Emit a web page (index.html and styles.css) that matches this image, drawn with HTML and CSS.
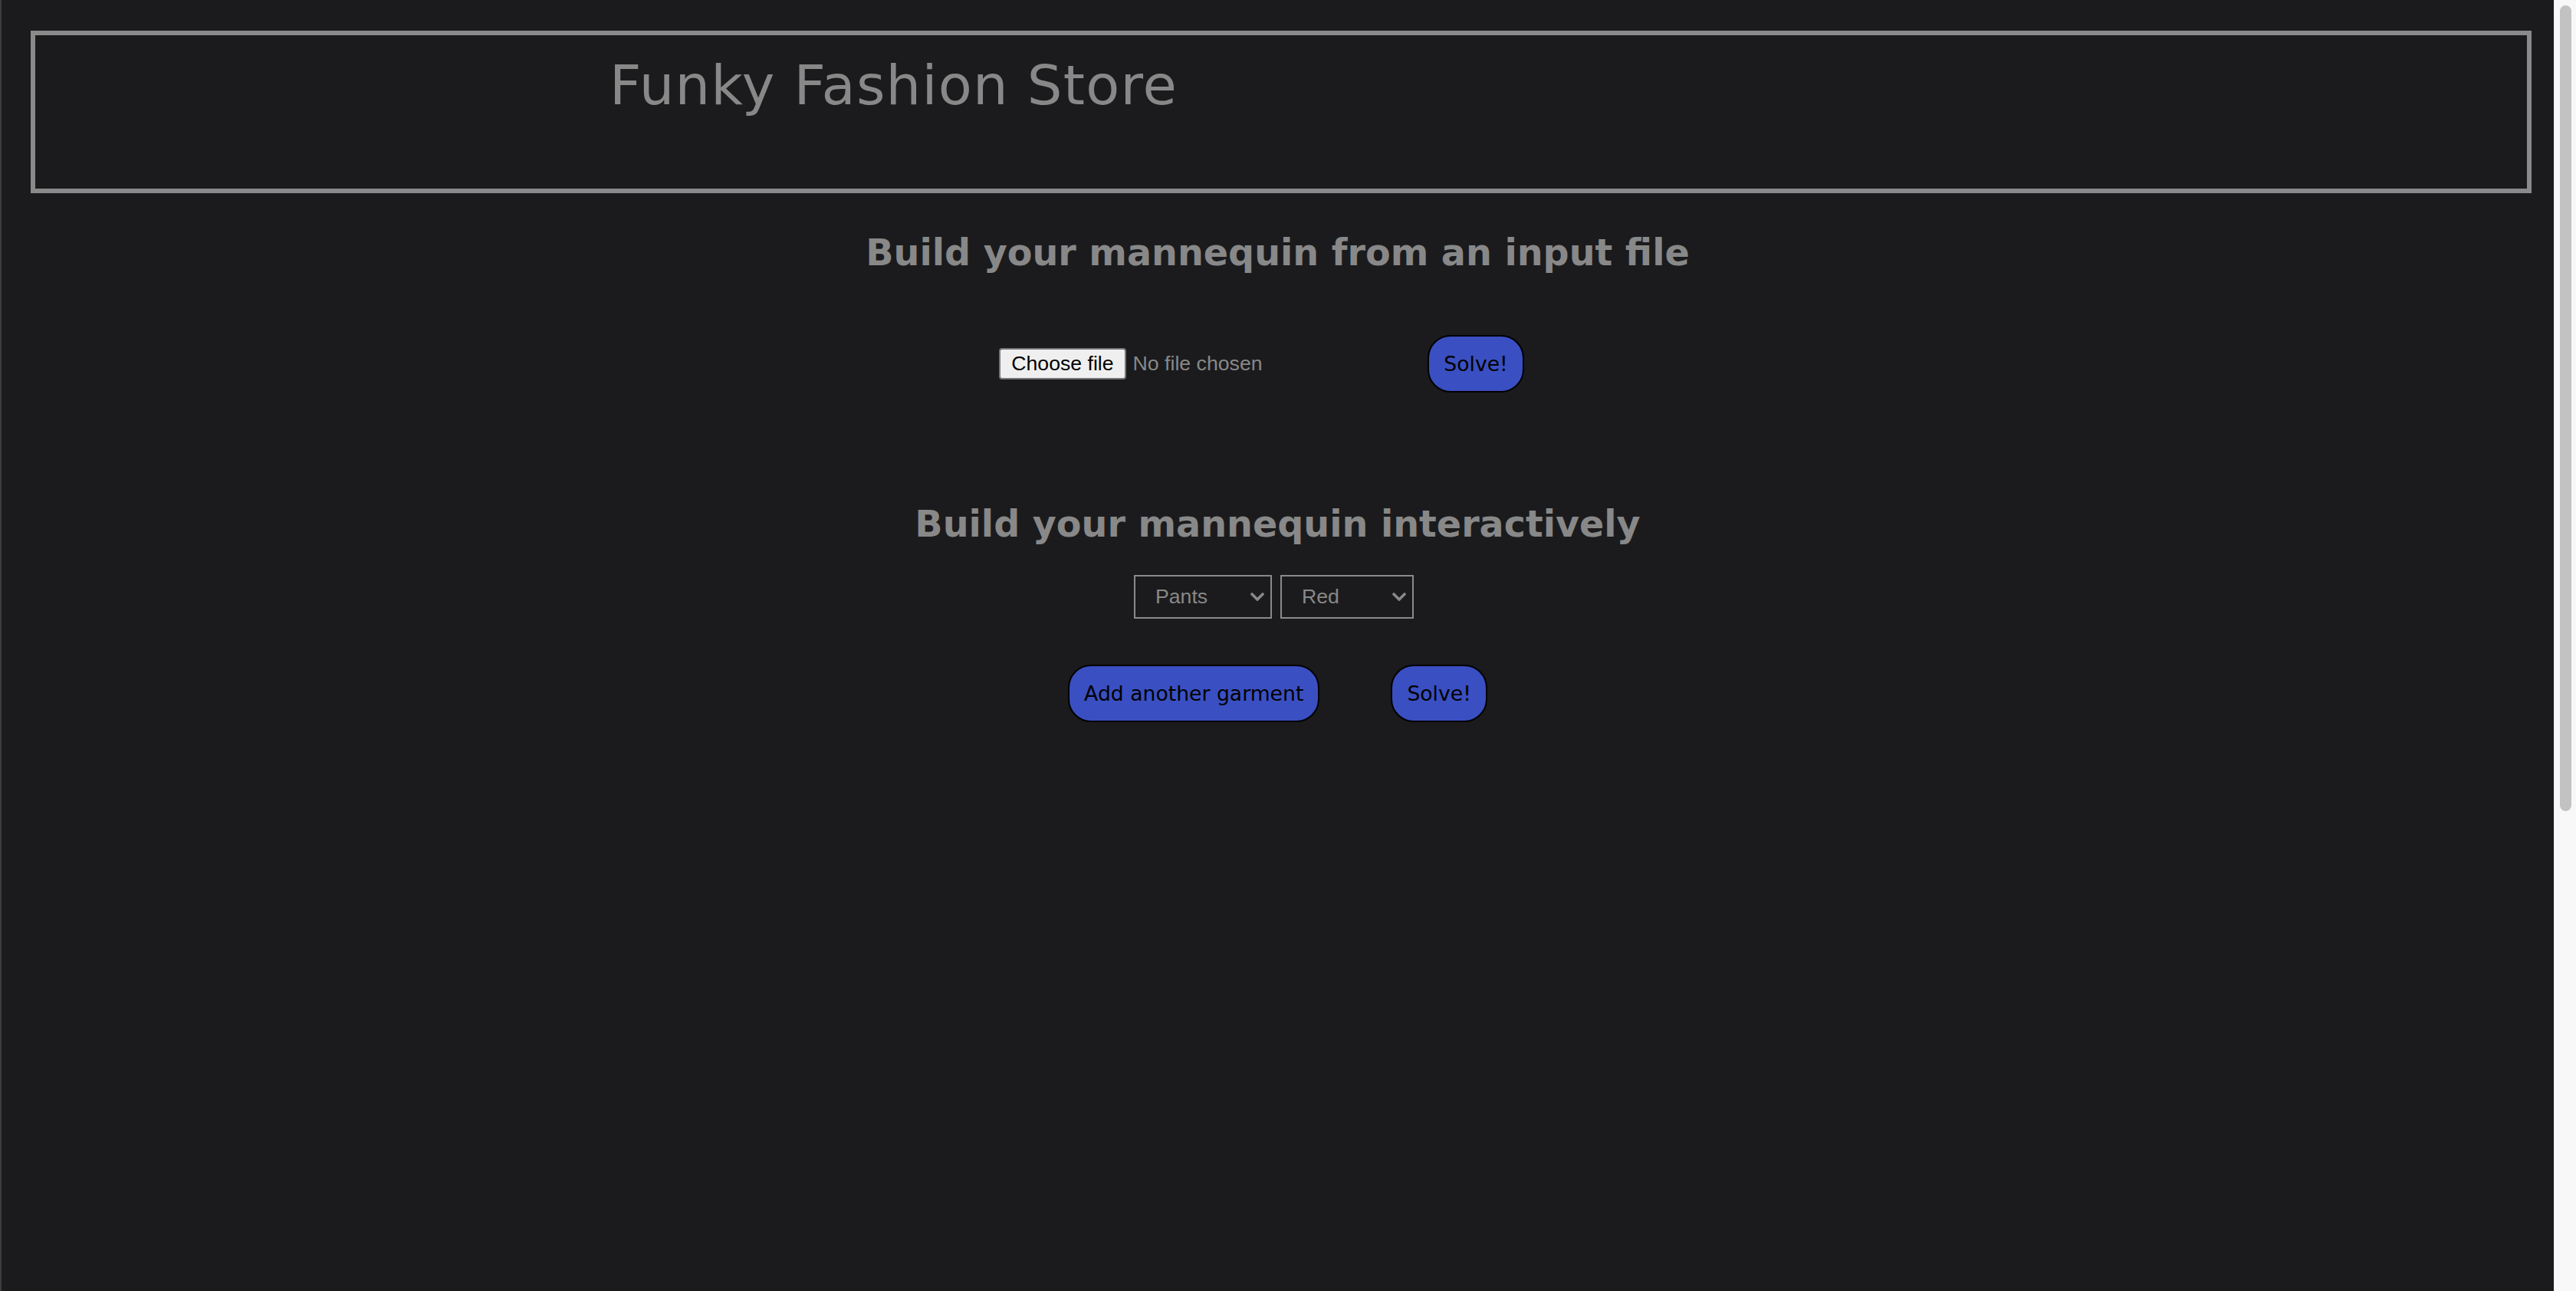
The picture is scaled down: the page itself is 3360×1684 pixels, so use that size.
FILE: index.html
```html
<!DOCTYPE html>
<html lang="en">
<head>
<meta charset="utf-8">
<title>Funky Fashion Store</title>
<link rel="stylesheet" href="styles.css">
</head>
<body>
<div class="frame">
  <div class="edge"></div>
  <main class="page">
    <header class="store-header">
      <div class="store-title">Funky Fashion Store</div>
    </header>

    <h2 class="section-title first">Build your mannequin from an input file</h2>
    <div class="file-row">
      <div class="file-widget">
        <span class="file-btn">Choose file</span>
        <span class="file-name">No file chosen</span>
      </div>
      <button class="action-btn file-solve">Solve!</button>
    </div>

    <h2 class="section-title second">Build your mannequin interactively</h2>
    <div class="select-row">
      <div class="fake-select garment">
        <span class="select-label">Pants</span>
        <svg class="chev" width="18" height="12" viewBox="0 0 18 12"><path d="M2 2 L9 9 L16 2" fill="none" stroke="#888888" stroke-width="3.6" stroke-linecap="round" stroke-linejoin="round"/></svg>
      </div>
      <div class="fake-select colour">
        <span class="select-label">Red</span>
        <svg class="chev" width="18" height="12" viewBox="0 0 18 12"><path d="M2 2 L9 9 L16 2" fill="none" stroke="#888888" stroke-width="3.6" stroke-linecap="round" stroke-linejoin="round"/></svg>
      </div>
    </div>
    <div class="button-row">
      <button class="action-btn">Add another garment</button>
      <button class="action-btn solve-two">Solve!</button>
    </div>
  </main>
  <div class="scrollbar"><div class="thumb"></div></div>
</div>
</body>
</html>
```

FILE: styles.css
```css
html, body {
  margin: 0;
  padding: 0;
  height: 100%;
  overflow: hidden;
  background: #1b1b1d;
}

.frame {
  display: flex;
  height: 100vh;
}

.edge {
  width: 2px;
  flex: none;
  background: #3c3c3e;
}

.page {
  flex: 1;
  min-width: 0;
  display: flex;
  flex-direction: column;
  background: #1b1b1d;
  color: #888888;
}

.store-header {
  box-sizing: border-box;
  height: 212px;
  margin: 40px 29px 0 38px;
  border: 6px solid #8a8a8a;
  padding: 23px 0 0 749px;
}

.store-title {
  font-family: "DejaVu Sans", Verdana, sans-serif;
  font-size: 72px;
  letter-spacing: 1.2px;
  line-height: normal;
  color: #888888;
  white-space: nowrap;
}

.section-title {
  margin: 0;
  text-align: center;
  font-family: "DejaVu Sans", Verdana, sans-serif;
  font-weight: bold;
  font-size: 47.6px;
  line-height: normal;
  color: #888888;
}

.section-title.first {
  margin-top: 50px;
}

.section-title.second {
  margin-top: 144px;
}

.file-row {
  margin-top: 80px;
  display: flex;
  justify-content: center;
  align-items: center;
  padding-right: 42px;
}

.file-widget {
  width: 497px;
  display: flex;
  align-items: center;
  font-family: "Liberation Sans", Arial, sans-serif;
  font-size: 26.67px;
}

.file-btn {
  box-sizing: border-box;
  height: 41px;
  line-height: 37px;
  padding: 0 14px;
  background: #efefef;
  border: 2px solid #767676;
  border-radius: 4px;
  color: #000000;
}

.file-name {
  margin-left: 9px;
  color: #888888;
}

.action-btn {
  box-sizing: border-box;
  height: 75px;
  padding: 20px 19px;
  margin: 0;
  font-family: "DejaVu Sans", Verdana, sans-serif;
  font-size: 26.67px;
  line-height: 31px;
  color: #000000;
  background: #3a4fc1;
  border: 2px solid #000000;
  border-radius: 30px;
  white-space: nowrap;
}

.file-solve {
  margin-left: 62px;
}

.select-row {
  margin-top: 39px;
  display: flex;
  justify-content: center;
  gap: 11px;
  padding-right: 10px;
}

.fake-select {
  box-sizing: border-box;
  height: 57px;
  border: 2px solid #8a8a8a;
  display: flex;
  align-items: center;
  justify-content: space-between;
  padding: 0 8px 0 26px;
  font-family: "Liberation Sans", Arial, sans-serif;
  font-size: 26.67px;
  color: #888888;
}

.fake-select.garment {
  width: 180px;
}

.fake-select.colour {
  width: 174px;
}

.chev {
  display: block;
  flex: none;
}

.button-row {
  margin-top: 60px;
  display: flex;
  justify-content: center;
  gap: 93px;
}

.scrollbar {
  width: 29px;
  flex: none;
  box-sizing: border-box;
  background: #f8f8f8;
  border-left: 1px solid #ececec;
  padding: 7px 6px 0 7px;
}

.thumb {
  height: 1051px;
  background: #c2c2c2;
  border-radius: 8px;
}
```
